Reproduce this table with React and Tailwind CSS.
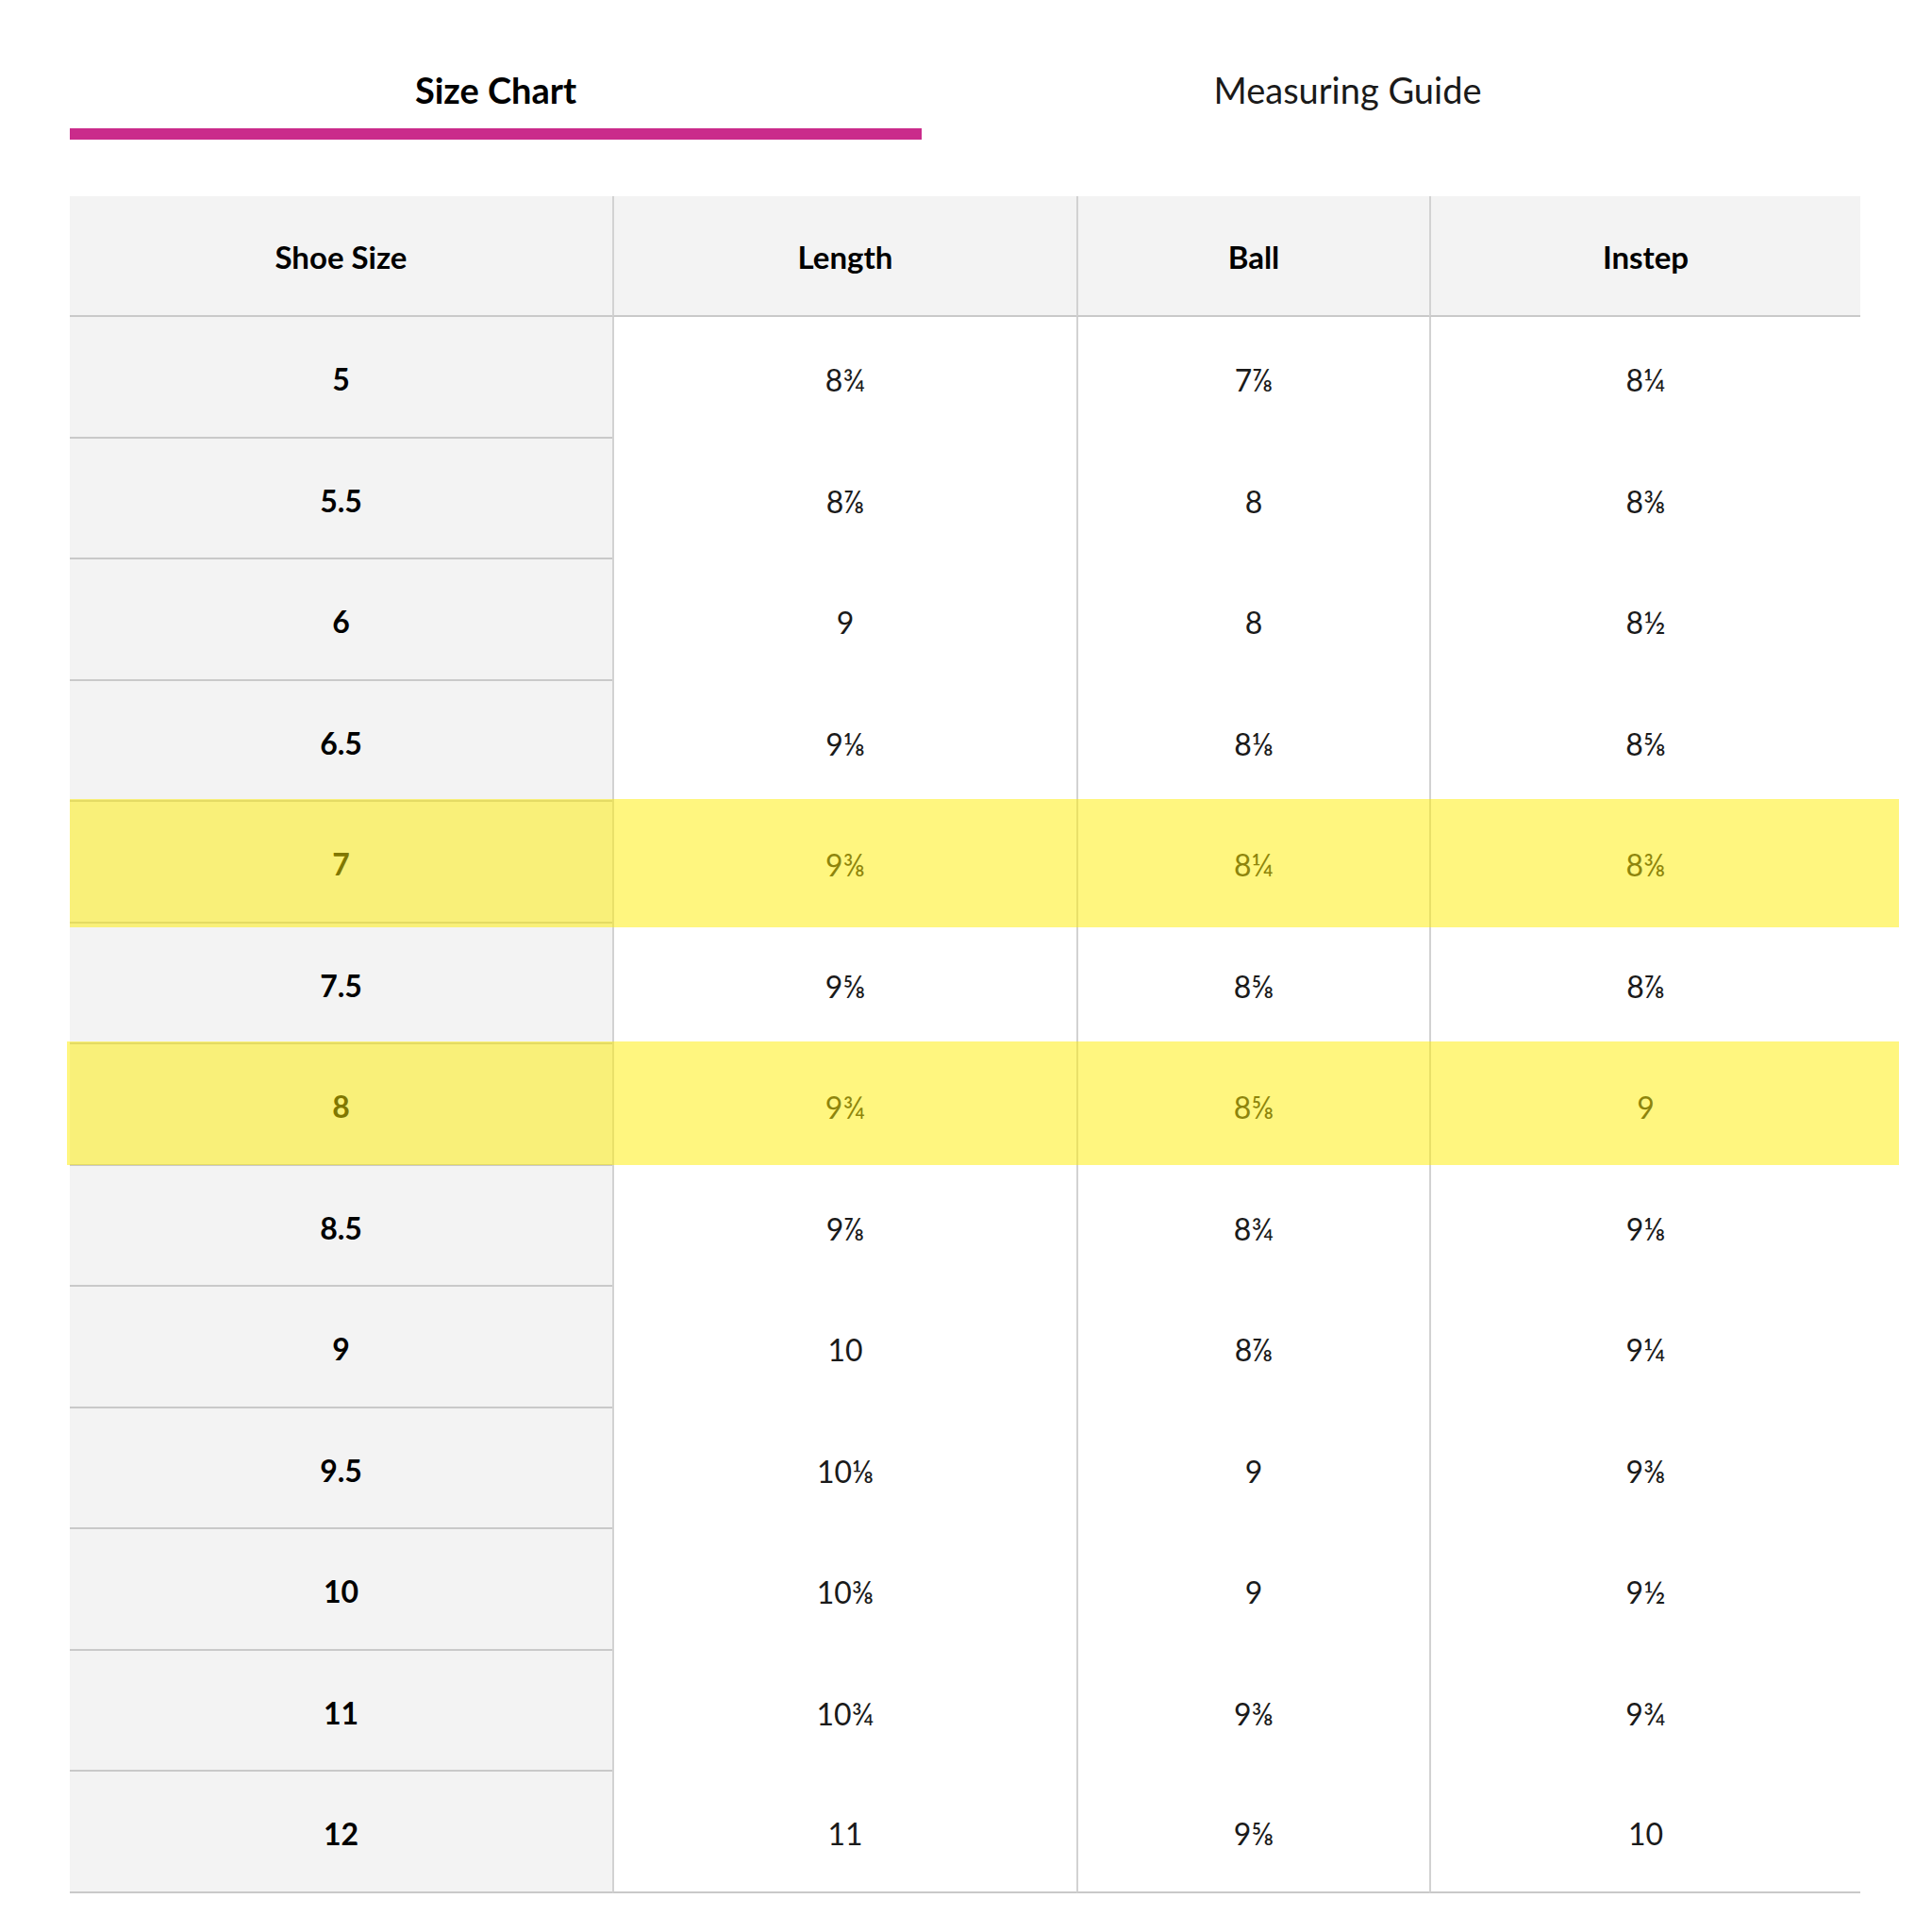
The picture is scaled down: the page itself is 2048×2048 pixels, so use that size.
import React from "react";

const rows = [
  ["5", "8¾", "7⅞", "8¼"],
  ["5.5", "8⅞", "8", "8⅜"],
  ["6", "9", "8", "8½"],
  ["6.5", "9⅛", "8⅛", "8⅝"],
  ["7", "9⅜", "8¼", "8⅜"],
  ["7.5", "9⅝", "8⅝", "8⅞"],
  ["8", "9¾", "8⅝", "9"],
  ["8.5", "9⅞", "8¾", "9⅛"],
  ["9", "10", "8⅞", "9¼"],
  ["9.5", "10⅛", "9", "9⅜"],
  ["10", "10⅜", "9", "9½"],
  ["11", "10¾", "9⅜", "9¾"],
  ["12", "11", "9⅝", "10"],
];

const font = { fontFamily: "Lato, 'Noto Sans', 'DejaVu Sans', sans-serif" };

export default function App() {
  return (
    <div className="min-h-[2048px] w-[2048px] bg-white text-[#111]" style={font}>
      <div className="pl-[74px]">
        {/* Tabs */}
        <div className="flex">
          <div className="w-[903px] flex flex-col items-center pt-[72px]">
            <div className="h-[46px] leading-[46px] text-[38px] font-bold text-black">Size Chart</div>
            <div className="mt-[18px] h-[12px] w-full bg-[#ca2b8b]" />
          </div>
          <div className="w-[903px] flex flex-col items-center pt-[72px]">
            <div className="h-[46px] leading-[46px] text-[38px] font-normal text-[#1a1a1a]">Measuring Guide</div>
            <div className="mt-[18px] h-[12px] w-full" />
          </div>
        </div>

        {/* Table */}
        <div className="relative mt-[60px] w-[1898px]">
          <div className="grid grid-cols-[575px_492px_374px_457px]">
            {["Shoe Size", "Length", "Ball", "Instep"].map((h, i) => (
              <div
                key={h}
                className={
                  "h-[128px] flex items-center justify-center pt-[3px] bg-[#f3f3f3] border-b-2 border-[#c9c9c9] text-[33px] font-bold text-black " +
                  (i > 0 ? "border-l-2 border-l-[#d2d2d2]" : "")
                }
              >
                {h}
              </div>
            ))}
            {rows.map((r, ri) => {
              const last = ri === rows.length - 1;
              return r.map((v, ci) => (
                <div
                  key={ri + "-" + ci}
                  className={
                    "h-[128.5px] flex items-center justify-center pt-[6px] text-[32px] " +
                    (ci === 0
                      ? "bg-[#f3f3f3] font-bold text-black border-b-2 border-[#c9c9c9] "
                      : "bg-white text-[#1a1a1a] border-l-2 border-l-[#d2d2d2] ") +
                    (last && ci > 0 ? "border-b-2 border-b-[#c9c9c9]" : "")
                  }
                >
                  {v}
                </div>
              ));
            })}
          </div>

          {/* Highlighter marks */}
          <div className="pointer-events-none absolute left-0 right-[-41px] top-[639px] h-[136px] bg-[rgba(255,238,0,0.5)]" />
          <div className="pointer-events-none absolute left-[-3px] right-[-41px] top-[896px] h-[131px] bg-[rgba(255,238,0,0.5)]" />
        </div>
      </div>
    </div>
  );
}
